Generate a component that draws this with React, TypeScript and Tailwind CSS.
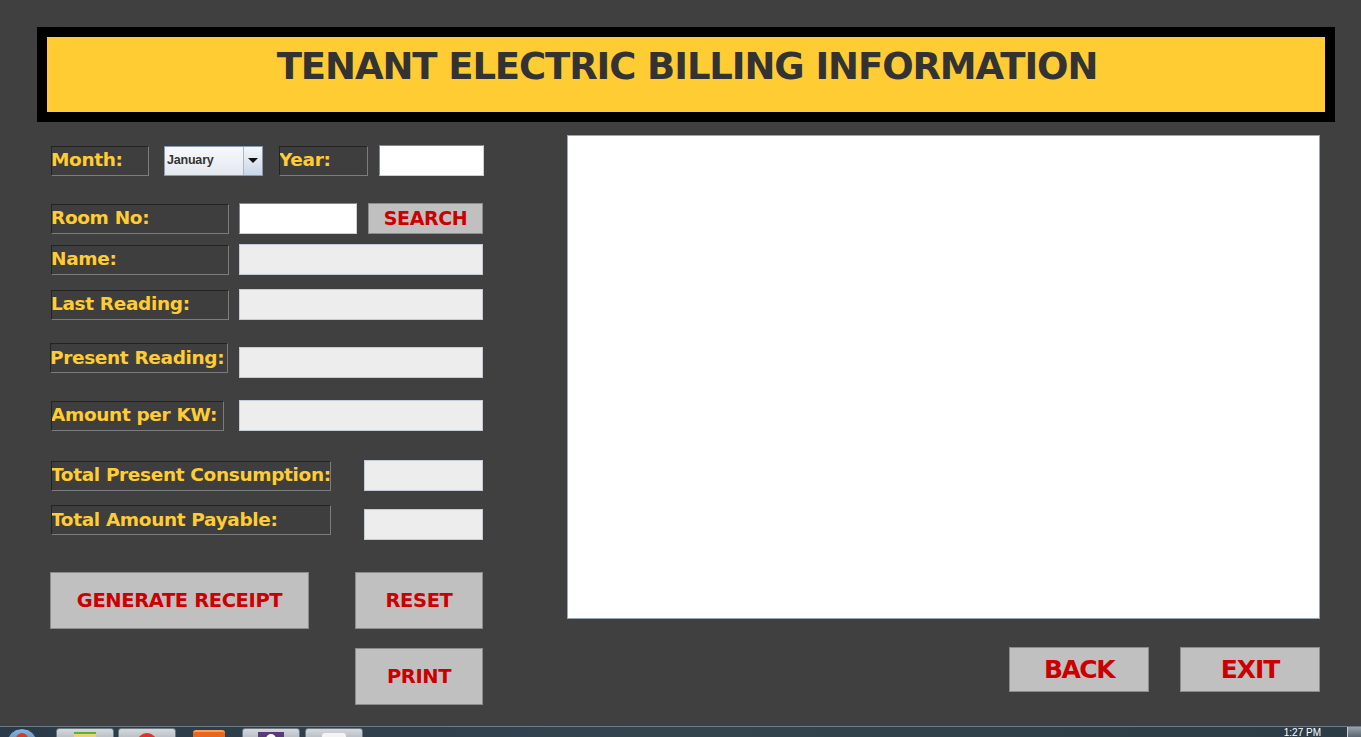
import React from "react";

const F = { fontFamily: "'DejaVu Sans', Verdana, sans-serif" };

function Label({ text, w, className = "" }: { text: string; w: string; className?: string }) {
  return (
    <div
      className={`${w} h-[30px] flex items-center border border-t-[#232323] border-l-[#232323] border-b-[#7c7c7c] border-r-[#7c7c7c] bg-[#3e3e3e] text-[#ffcc33] font-bold text-[18.5px] tracking-[-0.35px] leading-none whitespace-nowrap overflow-hidden ${className}`}
      style={F}
    >
      <span className="-ml-[1px]">{text}</span>
    </div>
  );
}

function Btn({ text, w, h, size, className = "" }: { text: string; w: string; h: string; size: string; className?: string }) {
  return (
    <div
      className={`${w} ${h} flex items-center justify-center bg-[#c0c0c0] border border-[#8c8c8c] text-[#cc0000] font-bold ${size} leading-none ${className}`}
      style={F}
    >
      {text}
    </div>
  );
}

function GrayInput({ w, h = "h-[31px]", className = "" }: { w: string; h?: string; className?: string }) {
  return <div className={`${w} ${h} bg-[#ededed] border border-[#c3ccd6] ${className}`} />;
}

function WhiteInput({ w, className = "" }: { w: string; className?: string }) {
  return (
    <div
      className={`${w} h-[31px] bg-white border border-t-[#7f8a96] border-l-[#7f8a96] border-b-[#c9d0d8] border-r-[#c9d0d8] ${className}`}
    />
  );
}

export default function App() {
  return (
    <div className="w-[1361px] h-[737px] bg-[#404040] overflow-hidden flex flex-col">
      {/* header */}
      <div className="pt-[27px] pl-[37px]">
        <div className="w-[1298px] h-[95px] border-[10px] border-black bg-[#ffcc33] flex items-center justify-center">
          <span
            className="text-[#333333] font-bold text-[37px] tracking-[-1.1px] leading-none pb-[16px] pl-[2px]"
            style={F}
          >
            TENANT ELECTRIC BILLING INFORMATION
          </span>
        </div>
      </div>

      <div className="flex">
        {/* left form */}
        <div className="pl-[50px] w-[484px] flex flex-col">
          {/* row 1 */}
          <div className="flex items-center mt-[23px] pl-[1px]">
            <Label text="Month:" w="w-[98px]" />
            <div className="ml-[15px] w-[99px] h-[30px] flex border border-[#8a9ab0] bg-gradient-to-b from-[#f7f8fb] to-[#e3e8ef]">
              <div
                className="flex-1 flex items-center pl-[2px] text-[12.5px] font-bold text-[#333] tracking-[-0.2px]"
                style={{ fontFamily: "'Liberation Sans', Arial, sans-serif" }}
              >
                January
              </div>
              <div className="w-[19px] border-l border-[#a9b8cc] bg-gradient-to-b from-[#f4f7fb] to-[#c9d7e8] flex items-center justify-center">
                <div className="w-0 h-0 border-l-[5px] border-r-[5px] border-t-[5px] border-l-transparent border-r-transparent border-t-[#111]" />
              </div>
            </div>
            <Label text="Year:" w="w-[89px]" className="ml-[16px]" />
            <WhiteInput w="w-[105px]" className="ml-[11px]" />
          </div>

          {/* row 2 */}
          <div className="flex items-center mt-[27px] pl-[1px]">
            <Label text="Room No:" w="w-[178px]" />
            <WhiteInput w="w-[118px]" className="ml-[10px]" />
            <Btn text="SEARCH" w="w-[115px]" h="h-[31px]" size="text-[19px] tracking-[-0.4px]" className="ml-[11px]" />
          </div>

          {/* name */}
          <div className="flex items-center mt-[10px] pl-[1px]">
            <Label text="Name:" w="w-[178px]" />
            <GrayInput w="w-[244px]" className="ml-[10px]" />
          </div>

          {/* last reading */}
          <div className="flex items-center mt-[14px] pl-[1px]">
            <Label text="Last Reading:" w="w-[178px]" />
            <GrayInput w="w-[244px]" className="ml-[10px]" />
          </div>

          {/* present reading */}
          <div className="flex items-start mt-[23px]">
            <Label text="Present Reading:" w="w-[178px]" />
            <GrayInput w="w-[244px]" className="ml-[11px] mt-[4px]" />
          </div>

          {/* amount per kw */}
          <div className="flex items-center mt-[22px] pl-[1px]">
            <Label text="Amount per KW:" w="w-[173px]" />
            <GrayInput w="w-[244px]" className="ml-[15px]" />
          </div>

          {/* total present consumption */}
          <div className="flex items-center mt-[29px] pl-[1px]">
            <Label text="Total Present Consumption:" w="w-[280px]" />
            <GrayInput w="w-[119px]" className="ml-[33px]" />
          </div>

          {/* total amount payable */}
          <div className="flex items-start mt-[14px] pl-[1px]">
            <Label text="Total Amount Payable:" w="w-[280px]" />
            <GrayInput w="w-[119px]" className="ml-[33px] mt-[4px]" />
          </div>

          {/* buttons */}
          <div className="flex mt-[32px]">
            <Btn text="GENERATE RECEIPT" w="w-[259px]" h="h-[57px]" size="text-[19.5px] tracking-[-0.4px]" />
            <Btn text="RESET" w="w-[128px]" h="h-[57px]" size="text-[19.5px] tracking-[-0.4px]" className="ml-[46px]" />
          </div>
          <div className="flex mt-[19px] pl-[305px]">
            <Btn text="PRINT" w="w-[128px]" h="h-[57px]" size="text-[19.5px] tracking-[-0.4px]" />
          </div>
        </div>

        {/* right */}
        <div className="ml-[83px] flex flex-col">
          <div className="mt-[13px] w-[753px] h-[484px] bg-white border border-[#9aa6b4]" />
          <div className="flex justify-end mt-[28px] gap-[31px]">
            <Btn text="BACK" w="w-[140px]" h="h-[45px]" size="text-[25px] tracking-[-1.5px]" />
            <Btn text="EXIT" w="w-[140px]" h="h-[45px]" size="text-[25px] tracking-[-1px]" />
          </div>
        </div>
      </div>

      {/* taskbar */}
      <div className="mt-auto h-[11px] bg-gradient-to-r from-[#2a3a48] via-[#34444f] to-[#2c3b46] border-t border-[#6d7b86] flex items-start relative">
        <div className="ml-[6px] mt-[1px] w-[32px] h-[32px] rounded-full bg-gradient-to-b from-[#8fb4d8] to-[#2b5f94] border border-[#1d3550] flex justify-center">
          <div className="mt-[4px] w-[12px] h-[12px] rounded-full bg-[#d33b2b]" />
        </div>
        <div className="ml-[18px] mt-[1px] w-[58px] h-[20px] rounded-t-[3px] bg-gradient-to-b from-[#d5d9dd] to-[#9aa3ab] border border-[#6f7880] flex justify-center">
          <div className="mt-[3px] w-[22px] h-[8px] bg-[#e8d27a] border-t-2 border-[#5cb13b]" />
        </div>
        <div className="ml-[4px] mt-[1px] w-[58px] h-[20px] rounded-t-[3px] bg-gradient-to-b from-[#d5d9dd] to-[#9aa3ab] border border-[#6f7880] flex justify-center">
          <div className="mt-[4px] w-[20px] h-[20px] rounded-full bg-[#e0302a]" />
        </div>
        <div className="ml-[17px] mt-[3px] w-[32px] h-[20px] rounded-[3px] bg-[#e8661d] border-t-2 border-[#f3a25f]" />
        <div className="ml-[17px] mt-[1px] w-[58px] h-[20px] rounded-t-[3px] bg-gradient-to-b from-[#d5d9dd] to-[#9aa3ab] border border-[#6f7880] flex justify-center">
          <div className="mt-[3px] w-[26px] h-[20px] bg-[#5a3b78] flex justify-center">
            <div className="mt-[2px] w-[10px] h-[10px] rounded-full bg-white" />
          </div>
        </div>
        <div className="ml-[5px] mt-[1px] w-[58px] h-[20px] rounded-t-[3px] bg-gradient-to-b from-[#d5d9dd] to-[#9aa3ab] border border-[#6f7880] flex justify-center">
          <div className="mt-[4px] w-[24px] h-[20px] rounded-[3px] bg-[#f4f4f4]" />
        </div>
        <div
          className="ml-auto mr-[26px] mt-[1px] text-white text-[10px] leading-none"
          style={{ fontFamily: "'Liberation Sans', Arial, sans-serif" }}
        >
          1:27 PM
        </div>
        <div className="w-[14px] h-full bg-gradient-to-b from-[#9aa4ae] to-[#5b6670] border-l border-[#c9d0d6]" />
      </div>
    </div>
  );
}
